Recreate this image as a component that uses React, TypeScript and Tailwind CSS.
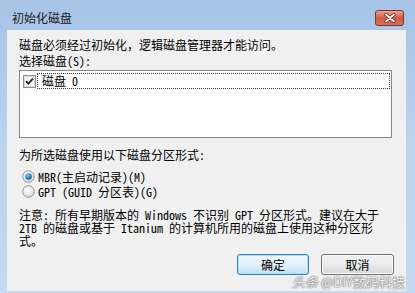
import React from "react";

function CheckBox() {
  return (
    <svg width="13" height="13" viewBox="0 0 13 13" className="shrink-0">
      <rect x="0.5" y="0.5" width="12" height="12" fill="#fff" stroke="#8e8f8f" />
      <rect x="1.5" y="1.5" width="10" height="10" fill="#f4f4f4" stroke="#dcdcdc" />
      <path d="M3 6.2 L5.3 8.6 L10 3.6" fill="none" stroke="#1c2a3a" strokeWidth="1.8" />
    </svg>
  );
}

function Radio({ checked }: { checked?: boolean }) {
  return (
    <svg width="13" height="13" viewBox="0 0 13 13" className="shrink-0">
      <defs>
        <radialGradient id="rfill" cx="0.4" cy="0.35" r="0.7">
          <stop offset="0" stopColor="#ffffff" />
          <stop offset="1" stopColor="#d6d6d6" />
        </radialGradient>
        <radialGradient id="rdot" cx="0.4" cy="0.35" r="0.7">
          <stop offset="0" stopColor="#8fd3f5" />
          <stop offset="0.6" stopColor="#1f7fc4" />
          <stop offset="1" stopColor="#0d4f8a" />
        </radialGradient>
      </defs>
      <circle cx="6.5" cy="6.5" r="5.8" fill="url(#rfill)" stroke="#8a8a8a" strokeWidth="0.9" />
      {checked && <circle cx="6.5" cy="6.5" r="3.2" fill="url(#rdot)" />}
    </svg>
  );
}

export default function App() {
  return (
    <div className="relative w-[415px] h-[293px] overflow-hidden bg-linear-to-b from-[#a6c3e6] via-[#bcd4ef] to-[#c4daf2] flex flex-col font-['Noto_Sans_Mono_CJK_SC','Noto_Sans_CJK_SC',sans-serif] text-[12px] text-black">
      <div className="h-[30px] shrink-0 flex items-start pl-[12px] pr-[11px]">
        <span className="mt-[10px] leading-[16px] text-[#1a1a1a]">初始化磁盘</span>
        <div className="ml-auto mt-[10px] w-[29px] h-[16px] rounded-[3px] border border-[#7d3326] bg-linear-to-b from-[#e8a395] via-[#cf5a43] to-[#d2735d] flex items-center justify-center">
          <svg width="12" height="10" viewBox="0 0 12 10">
            <path d="M2 1.5 L10 8.5 M10 1.5 L2 8.5" stroke="#5a1a10" strokeWidth="3.2" strokeLinecap="round" />
            <path d="M2 1.5 L10 8.5 M10 1.5 L2 8.5" stroke="#fff" strokeWidth="1.8" strokeLinecap="round" />
          </svg>
        </div>
      </div>

      <div className="ml-[7px] mr-[9px] h-[261px] shrink-0 bg-[#f0f0f0] pl-[12px] pr-[14px] pt-[7px] flex flex-col">
        <div className="leading-[16px]">磁盘必须经过初始化，逻辑磁盘管理器才能访问。</div>
        <div className="leading-[16px]">选择磁盘(S):</div>

        <div className="mt-[1px] h-[68px] border border-[#828790] bg-white p-[1px]">
          <div className="flex items-center h-[16px] mt-[1px]">
            <div className="ml-[2px]">
              <CheckBox />
            </div>
            <div className="ml-[1px] flex-1 h-[16px] border border-dotted border-[#333] flex items-center pl-[4px] leading-[14px]">
              磁盘 0
            </div>
          </div>
        </div>

        <div className="mt-[9px] leading-[16px]">为所选磁盘使用以下磁盘分区形式:</div>
        <div className="mt-[6px] flex flex-col">
          <div className="h-[15px] flex items-center ml-[3px] gap-[3px]">
            <Radio checked />
            <span className="leading-[15px]">MBR(主启动记录)(M)</span>
          </div>
          <div className="h-[15px] flex items-center ml-[3px] gap-[3px]">
            <Radio />
            <span className="leading-[15px]">GPT (GUID 分区表)(G)</span>
          </div>
        </div>

        <div className="mt-[9px] leading-[13px]">
          <div>注意: 所有早期版本的 Windows 不识别 GPT 分区形式。建议在大于</div>
          <div>2TB 的磁盘或基于 Itanium 的计算机所用的磁盘上使用这种分区形</div>
          <div>式。</div>
        </div>

        <div className="mt-[7px] flex justify-end gap-[12px] mr-[-2px]">
          <div className="w-[72px] h-[21px] rounded-[3px] border border-[#3c7fb1] bg-linear-to-b from-[#f2f9fd] via-[#e3f1fb] to-[#bde0f5] shadow-[inset_0_0_0_1px_#a6e2fb] flex items-center justify-center leading-[16px]">
            确定
          </div>
          <div className="w-[73px] h-[21px] rounded-[3px] border border-[#707070] bg-linear-to-b from-[#f2f2f2] via-[#ebebeb] to-[#d6d6d6] shadow-[inset_0_0_0_1px_#fcfcfc] flex items-center justify-center leading-[16px]">
            取消
          </div>
        </div>
      </div>

      <div className="absolute right-[10px] top-[275px] text-[13px] leading-[14px] text-white/90 [text-shadow:0_0_2px_#666,0_0_1px_#555] font-['Noto_Sans_CJK_SC',sans-serif]">
        <span className="italic">头条</span> @DIY数码科技
      </div>
    </div>
  );
}
